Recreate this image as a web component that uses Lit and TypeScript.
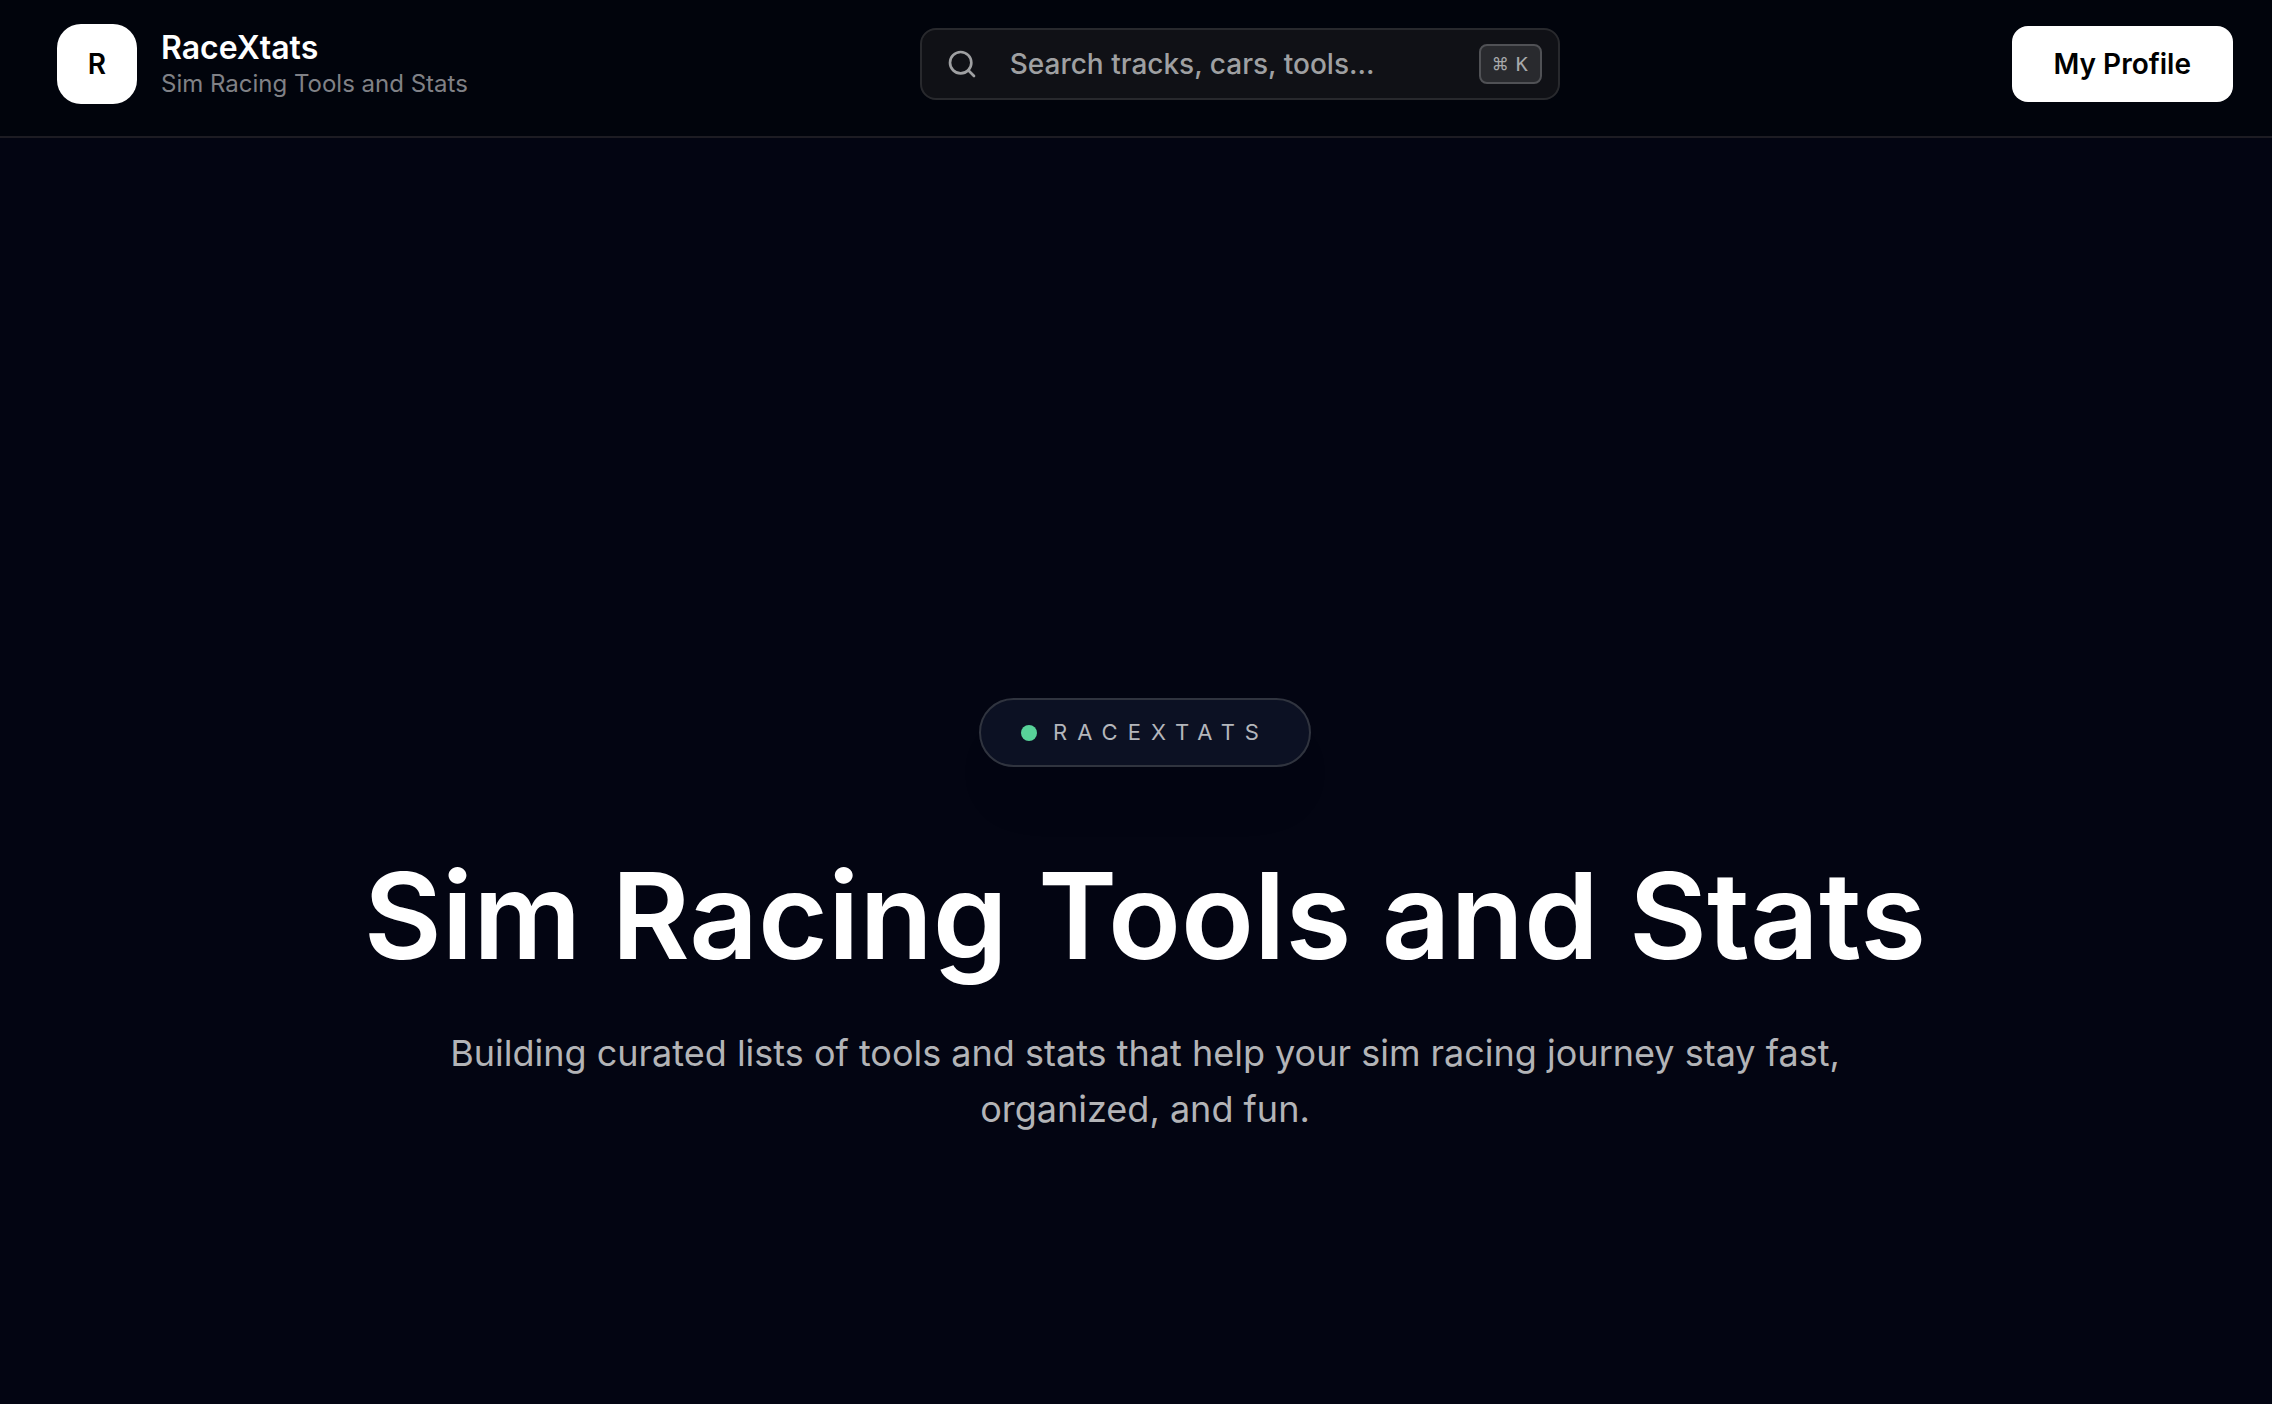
import { LitElement, html, css } from "lit";
import { customElement } from "lit/decorators.js";

const sansStack = css`Inter, "Liberation Sans", sans-serif`;

@customElement("site-header")
class SiteHeader extends LitElement {
  static styles = css`
    :host {
      display: block;
      font-family: ${sansStack};
    }
    .bar {
      box-sizing: border-box;
      display: flex;
      align-items: center;
      justify-content: space-between;
      gap: 32px;
      padding: 24px 39px 32px 57px;
      background: #01040c;
      border-bottom: 2px solid #1d1c23;
    }
    .brand {
      display: flex;
      align-items: center;
      gap: 24px;
      color: #fff;
      text-decoration: none;
    }
    .mark {
      display: grid;
      place-items: center;
      width: 80px;
      height: 80px;
      border-radius: 24px;
      background: #fff;
      color: #000;
      font-size: 28px;
      line-height: 40px;
      font-weight: 600;
    }
    .names {
      display: flex;
      flex-direction: column;
    }
    .name {
      font-size: 32px;
      line-height: 40px;
      font-weight: 600;
    }
    .tagline {
      font-size: 24px;
      line-height: 32px;
      color: #808186;
    }
    .search {
      box-sizing: border-box;
      flex: 0 1 640px;
      display: flex;
      align-items: center;
      height: 72px;
      padding: 0 16px 0 24px;
      border: 2px solid #28292d;
      border-radius: 16px;
      background: #101116;
      color: #9fa0a2;
    }
    .glass {
      flex: none;
      width: 32px;
      height: 32px;
      margin-right: 32px;
    }
    .field {
      flex: 1;
      min-width: 0;
      padding: 0;
      border: 0;
      outline: 0;
      background: transparent;
      color: #fff;
      font-family: inherit;
      font-size: 28px;
      line-height: 40px;
      font-weight: 500;
    }
    .field::placeholder {
      color: #9fa0a2;
      opacity: 1;
    }
    .keys {
      box-sizing: border-box;
      flex: none;
      display: flex;
      align-items: center;
      justify-content: space-between;
      width: 63px;
      padding: 0 12px 0 11px;
      border: 2px solid #505155;
      border-radius: 8px;
      background: #292a2e;
      color: #a7a8aa;
      font-family: "DejaVu Sans Mono", monospace;
      font-size: 20px;
      line-height: 36px;
    }
    .command {
      font-family: ${sansStack};
      font-size: 17px;
    }
    .profile {
      padding: 18px 42px;
      border: 0;
      border-radius: 16px;
      background: #fff;
      color: #000;
      font-family: inherit;
      font-size: 28px;
      line-height: 40px;
      font-weight: 600;
      cursor: pointer;
    }
  `;

  render() {
    return html`
      <header class="bar">
        <a class="brand" href="/">
          <span class="mark">R</span>
          <span class="names">
            <span class="name">RaceXtats</span>
            <span class="tagline">Sim Racing Tools and Stats</span>
          </span>
        </a>
        <label class="search">
          <svg class="glass" viewBox="0 0 24 24" fill="none" stroke="currentColor"
            stroke-width="2" stroke-linecap="round" stroke-linejoin="round" aria-hidden="true">
            <circle cx="11" cy="11" r="8"></circle>
            <path d="m21 21-4.3-4.3"></path>
          </svg>
          <input class="field" type="text" placeholder="Search tracks, cars, tools..."
            aria-label="Search tracks, cars, tools..." />
          <kbd class="keys"><span class="command">⌘</span> <span>K</span></kbd>
        </label>
        <button class="profile" type="button">My Profile</button>
      </header>
    `;
  }
}

@customElement("hero-section")
class HeroSection extends LitElement {
  static styles = css`
    :host {
      display: flex;
      flex-direction: column;
      justify-content: center;
      font-family: ${sansStack};
    }
    .hero {
      display: flex;
      flex-direction: column;
      align-items: center;
      padding: 293px 0 0 18px;
      text-align: center;
    }
    .pill {
      display: flex;
      align-items: center;
      gap: 16px;
      padding: 16px 40px;
      border: 2px solid #30343f;
      border-radius: 36px;
      background: #0c1123;
      box-shadow: 0 40px 56px -28px rgba(0, 0, 0, 0.25);
      color: #b4b6bb;
      font-size: 22px;
      line-height: 33px;
      letter-spacing: 10px;
      text-transform: uppercase;
    }
    .dot {
      width: 16px;
      height: 16px;
      border-radius: 50%;
      background: #58d299;
    }
    .title {
      margin: 88px 0 0;
      color: #fff;
      font-size: 120px;
      line-height: 122px;
      font-weight: 600;
    }
    .lead {
      max-width: 1536px;
      margin: 48px 0 0;
      color: #b3b4b7;
      font-size: 36px;
      line-height: 56px;
    }
  `;

  render() {
    return html`
      <section class="hero">
        <div class="pill"><span class="dot"></span><span>RaceXtats</span></div>
        <h1 class="title">Sim Racing Tools and Stats</h1>
        <p class="lead">
          Building curated lists of tools and stats that help your sim racing journey stay fast,
          organized, and fun.
        </p>
      </section>
    `;
  }
}

@customElement("app-root")
class AppRoot extends LitElement {
  static styles = css`
    :host {
      display: flex;
      flex-direction: column;
      min-height: 100vh;
      background: #030512;
    }
    .main {
      flex: 1;
      display: grid;
    }
  `;

  render() {
    return html`
      <site-header></site-header>
      <main class="main"><hero-section></hero-section></main>
    `;
  }
}
